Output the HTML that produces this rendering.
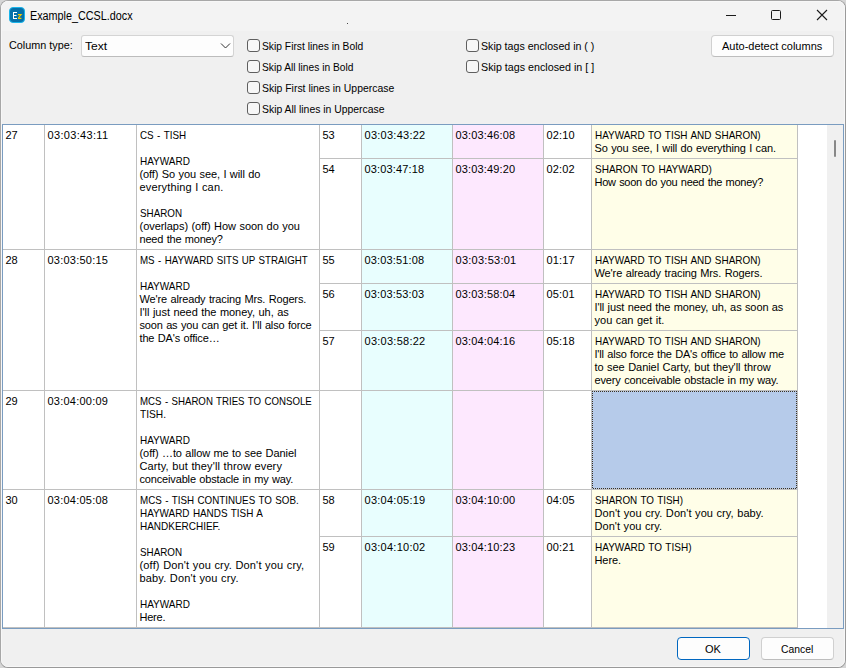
<!DOCTYPE html>
<html><head><meta charset="utf-8">
<style>
html,body{margin:0;padding:0;}
body{width:846px;height:668px;overflow:hidden;background:#d6d6d6;position:relative;font-family:"Liberation Sans",sans-serif;color:#000;}
#win{position:absolute;left:0;top:0;width:844px;height:666px;border:1px solid #a7a7a7;border-right-color:#9a9a9a;border-bottom-color:#999;border-radius:8px;background:#f0f0f0;overflow:hidden;}
#hl{position:absolute;left:1px;top:1px;width:842px;height:664px;border:1px solid #f7f7f7;border-radius:7px;pointer-events:none;}
#title{position:absolute;left:0;top:0;width:844px;height:30px;background:#f3f3f3;}
.abs{position:absolute;}
.lbl{position:absolute;font-size:11px;line-height:16px;white-space:pre;color:#000;transform-origin:0 0;}
.cb{position:absolute;width:11px;height:11px;border:1px solid #5f5f5f;border-radius:3px;background:#f7f7f7;box-sizing:content-box;}
.btn{position:absolute;box-sizing:border-box;border:1px solid #d0d0d0;border-bottom-color:#bdbdbd;border-radius:4px;background:#fdfdfd;}
#grid{position:absolute;left:2px;top:124px;width:842px;height:505px;}
#tbl{position:absolute;left:2px;top:124px;width:840px;height:503px;border:1px solid #7a9cc0;background:#fff;overflow:hidden;}
.bg{position:absolute;}
.vl{position:absolute;width:1px;background:#c0c0c0;}
.hl{position:absolute;height:1px;background:#c0c0c0;}
.sel{position:absolute;background:#b6cbea;box-sizing:border-box;}
.t{position:absolute;font-size:11px;line-height:13px;white-space:pre;color:#000;transform-origin:0 0;}
.u{letter-spacing:-0.6px;}
</style></head><body>
<div id="win"><div id="title"></div></div>
<div id="hl"></div>
<!-- icon -->
<svg class="abs" style="left:9px;top:7px" width="16" height="16" viewBox="0 0 16 16">
  <rect x="0.5" y="0.5" width="15" height="15" rx="3.5" ry="3.5" fill="#0670a8" stroke="#19b4ea" stroke-width="1"/>
  <path d="M4.5 5.5 H8 M4.5 5 V12 M4.5 8.5 H7.5 M4.5 11.5 H8" stroke="#fff" stroke-width="1" fill="none"/>
  <path d="M9 7.6 H12.2 L9.3 11 M9 11.4 H12.4" stroke="#f7c600" stroke-width="1.1" fill="none"/>
</svg>
<div class="lbl" style="left:30px;top:8px;font-size:12px;transform:scaleX(0.9)">Example_CCSL.docx</div>
<div class="abs" style="left:346.6px;top:22.6px;width:1.6px;height:1.6px;background:#111;border-radius:0.8px"></div>
<!-- window controls -->
<div class="abs" style="left:726px;top:15px;width:10px;height:1px;background:#1a1a1a"></div>
<div class="abs" style="left:771px;top:10px;width:8px;height:8px;border:1px solid #1a1a1a;border-radius:1.5px"></div>
<svg class="abs" style="left:816px;top:9px" width="12" height="12" viewBox="0 0 12 12"><path d="M1 1 L11 11 M11 1 L1 11" stroke="#1a1a1a" stroke-width="1.1"/></svg>

<div class="lbl" style="left:8.5px;top:37px;transform:scaleX(0.984)">Column type:</div>
<div class="abs" style="left:81px;top:35px;width:151px;height:20px;border:1px solid #d4d4d4;border-bottom-color:#bcbcbc;border-radius:3px;background:#fdfdfd"></div>
<div class="lbl" style="left:85px;top:38px;transform:scaleX(1.1)">Text</div>
<svg class="abs" style="left:220px;top:42px" width="11" height="7" viewBox="0 0 11 7"><path d="M1 1.5 L5.5 6 L10 1.5" stroke="#333" stroke-width="1" fill="none"/></svg>

<div class="cb" style="left:247px;top:39px"></div>
<div class="lbl" style="left:262px;top:38px;transform:scaleX(0.935)">Skip First lines in Bold</div>
<div class="cb" style="left:247px;top:60px"></div>
<div class="lbl" style="left:262px;top:59px;transform:scaleX(0.928)">Skip All lines in Bold</div>
<div class="cb" style="left:247px;top:81px"></div>
<div class="lbl" style="left:262px;top:80px;transform:scaleX(0.949)">Skip First lines in Uppercase</div>
<div class="cb" style="left:247px;top:102px"></div>
<div class="lbl" style="left:262px;top:101px;transform:scaleX(0.945)">Skip All lines in Uppercase</div>

<div class="cb" style="left:466px;top:39px"></div>
<div class="lbl" style="left:481px;top:38px;transform:scaleX(0.966)">Skip tags enclosed in ( )</div>
<div class="cb" style="left:466px;top:60px"></div>
<div class="lbl" style="left:481px;top:59px;transform:scaleX(0.974)">Skip tags enclosed in [ ]</div>

<div class="btn" style="left:711px;top:35px;width:123px;height:22px"></div>
<div class="lbl" style="left:722px;top:38px;">Auto-detect columns</div>

<div id="tbl"></div>
<div class="bg" style="left:362px;top:125px;width:90px;height:502px;background:#e8fefe"></div>
<div class="bg" style="left:453px;top:125px;width:90px;height:502px;background:#fde8fe"></div>
<div class="bg" style="left:592px;top:125px;width:205px;height:502px;background:#fffee8"></div>
<div class="sel" style="left:592px;top:391px;width:205px;height:98px"></div>
<div class="bg" style="left:592px;top:391px;width:205px;height:1px;background:repeating-linear-gradient(90deg,#3a3020 0 1px,transparent 1px 2px)"></div>
<div class="bg" style="left:592px;top:488px;width:204px;height:1px;background:repeating-linear-gradient(90deg,#3a3020 0 1px,transparent 1px 2px);background-position:1px 0"></div>
<div class="bg" style="left:592px;top:391px;width:1px;height:98px;background:repeating-linear-gradient(180deg,#3a3020 0 1px,transparent 1px 2px)"></div>
<div class="bg" style="left:796px;top:391px;width:1px;height:98px;background:repeating-linear-gradient(180deg,#3a3020 0 1px,transparent 1px 2px)"></div>
<div class="vl" style="left:44px;top:125px;height:503px"></div>
<div class="vl" style="left:136px;top:125px;height:503px"></div>
<div class="vl" style="left:319px;top:125px;height:503px"></div>
<div class="vl" style="left:361px;top:125px;height:503px"></div>
<div class="vl" style="left:452px;top:125px;height:503px"></div>
<div class="vl" style="left:543px;top:125px;height:503px"></div>
<div class="vl" style="left:591px;top:125px;height:503px"></div>
<div class="vl" style="left:797px;top:125px;height:503px"></div>
<div class="hl" style="left:3px;top:249px;width:794px"></div>
<div class="hl" style="left:3px;top:390px;width:794px"></div>
<div class="hl" style="left:3px;top:489px;width:794px"></div>
<div class="hl" style="left:3px;top:627px;width:794px"></div>
<div class="hl" style="left:319px;top:158px;width:478px"></div>
<div class="hl" style="left:319px;top:283px;width:478px"></div>
<div class="hl" style="left:319px;top:330px;width:478px"></div>
<div class="hl" style="left:319px;top:536px;width:478px"></div>
<div class="t" style="left:5.5px;top:129px">27</div>
<div class="t" style="left:47.5px;top:129px;letter-spacing:0.330px">03:03:43:11</div>
<div class="t" style="left:139.5px;top:129px;transform:scaleX(0.8945);word-spacing:0.800px">CS - TISH</div>
<div class="t" style="left:139.5px;top:155px;transform:scaleX(0.9074);word-spacing:0.800px">HAYWARD</div>
<div class="t" style="left:139.5px;top:168px;letter-spacing:-0.090px;word-spacing:0.490px">(off) So you see, I will do</div>
<div class="t" style="left:139.5px;top:181px;letter-spacing:0.157px;word-spacing:0.243px">everything I can.</div>
<div class="t" style="left:139.5px;top:207px;transform:scaleX(0.8933);word-spacing:0.800px">SHARON</div>
<div class="t" style="left:139.5px;top:220px;letter-spacing:-0.038px;word-spacing:0.438px">(overlaps) (off) How soon do you</div>
<div class="t" style="left:139.5px;top:233px;letter-spacing:-0.198px;word-spacing:0.598px">need the money?</div>
<div class="t" style="left:5.5px;top:254px">28</div>
<div class="t" style="left:47.5px;top:254px;letter-spacing:0.230px">03:03:50:15</div>
<div class="t" style="left:139.5px;top:254px;transform:scaleX(0.8851);word-spacing:0.800px">MS - HAYWARD SITS UP STRAIGHT</div>
<div class="t" style="left:139.5px;top:280px;transform:scaleX(0.9074);word-spacing:0.800px">HAYWARD</div>
<div class="t" style="left:139.5px;top:293px;letter-spacing:-0.145px;word-spacing:0.545px">We're already tracing Mrs. Rogers.</div>
<div class="t" style="left:139.5px;top:306px;letter-spacing:-0.024px;word-spacing:0.424px">I'll just need the money, uh, as</div>
<div class="t" style="left:139.5px;top:319px;letter-spacing:-0.164px;word-spacing:0.564px">soon as you can get it. I'll also force</div>
<div class="t" style="left:139.5px;top:332px;letter-spacing:-0.157px;word-spacing:0.557px">the DA's office…</div>
<div class="t" style="left:5.5px;top:395px">29</div>
<div class="t" style="left:47.5px;top:395px;letter-spacing:0.230px">03:04:00:09</div>
<div class="t" style="left:139.5px;top:395px;transform:scaleX(0.8793);word-spacing:0.800px">MCS - SHARON TRIES TO CONSOLE</div>
<div class="t" style="left:139.5px;top:408px;transform:scaleX(0.9259);word-spacing:0.800px">TISH.</div>
<div class="t" style="left:139.5px;top:434px;transform:scaleX(0.9074);word-spacing:0.800px">HAYWARD</div>
<div class="t" style="left:139.5px;top:447px;letter-spacing:-0.072px;word-spacing:0.472px">(off) …to allow me to see Daniel</div>
<div class="t" style="left:139.5px;top:460px;letter-spacing:0.128px;word-spacing:0.272px">Carty, but they'll throw every</div>
<div class="t" style="left:139.5px;top:473px;letter-spacing:-0.160px;word-spacing:0.560px">conceivable obstacle in my way.</div>
<div class="t" style="left:5.5px;top:494px">30</div>
<div class="t" style="left:47.5px;top:494px;letter-spacing:0.230px">03:04:05:08</div>
<div class="t" style="left:139.5px;top:494px;transform:scaleX(0.8906);word-spacing:0.800px">MCS - TISH CONTINUES TO SOB.</div>
<div class="t" style="left:139.5px;top:507px;transform:scaleX(0.8986);word-spacing:0.800px">HAYWARD HANDS TISH A</div>
<div class="t" style="left:139.5px;top:520px;transform:scaleX(0.9069);word-spacing:0.800px">HANDKERCHIEF.</div>
<div class="t" style="left:139.5px;top:546px;transform:scaleX(0.8933);word-spacing:0.800px">SHARON</div>
<div class="t" style="left:139.5px;top:559px;letter-spacing:0.164px;word-spacing:0.236px">(off) Don't you cry. Don't you cry,</div>
<div class="t" style="left:139.5px;top:572px;letter-spacing:0.157px;word-spacing:0.243px">baby. Don't you cry.</div>
<div class="t" style="left:139.5px;top:598px;transform:scaleX(0.9074);word-spacing:0.800px">HAYWARD</div>
<div class="t" style="left:139.5px;top:611px;letter-spacing:-0.225px">Here.</div>
<div class="t" style="left:322.5px;top:129px">53</div>
<div class="t" style="left:364.5px;top:129px;letter-spacing:0.260px">03:03:43:22</div>
<div class="t" style="left:455.5px;top:129px;letter-spacing:0.160px">03:03:46:08</div>
<div class="t" style="left:546.5px;top:129px;letter-spacing:0.175px">02:10</div>
<div class="t" style="left:594.5px;top:129px;transform:scaleX(0.9026);word-spacing:0.800px">HAYWARD TO TISH AND SHARON)</div>
<div class="t" style="left:594.5px;top:142px;letter-spacing:-0.107px;word-spacing:0.507px">So you see, I will do everything I can.</div>
<div class="t" style="left:322.5px;top:163px">54</div>
<div class="t" style="left:364.5px;top:163px;letter-spacing:0.160px">03:03:47:18</div>
<div class="t" style="left:455.5px;top:163px;letter-spacing:0.160px">03:03:49:20</div>
<div class="t" style="left:546.5px;top:163px;letter-spacing:0.175px">02:02</div>
<div class="t" style="left:594.5px;top:163px;transform:scaleX(0.9104);word-spacing:0.800px">SHARON TO HAYWARD)</div>
<div class="t" style="left:594.5px;top:176px;letter-spacing:-0.276px;word-spacing:0.676px">How soon do you need the money?</div>
<div class="t" style="left:322.5px;top:254px">55</div>
<div class="t" style="left:364.5px;top:254px;letter-spacing:0.160px">03:03:51:08</div>
<div class="t" style="left:455.5px;top:254px;letter-spacing:0.260px">03:03:53:01</div>
<div class="t" style="left:546.5px;top:254px;letter-spacing:0.175px">01:17</div>
<div class="t" style="left:594.5px;top:254px;transform:scaleX(0.9026);word-spacing:0.800px">HAYWARD TO TISH AND SHARON)</div>
<div class="t" style="left:594.5px;top:267px;letter-spacing:-0.102px;word-spacing:0.502px">We're already tracing Mrs. Rogers.</div>
<div class="t" style="left:322.5px;top:288px">56</div>
<div class="t" style="left:364.5px;top:288px;letter-spacing:0.160px">03:03:53:03</div>
<div class="t" style="left:455.5px;top:288px;letter-spacing:0.160px">03:03:58:04</div>
<div class="t" style="left:546.5px;top:288px;letter-spacing:0.175px">05:01</div>
<div class="t" style="left:594.5px;top:288px;transform:scaleX(0.9026);word-spacing:0.800px">HAYWARD TO TISH AND SHARON)</div>
<div class="t" style="left:594.5px;top:301px;letter-spacing:-0.108px;word-spacing:0.508px">I'll just need the money, uh, as soon as</div>
<div class="t" style="left:594.5px;top:314px;letter-spacing:0.011px;word-spacing:0.389px">you can get it.</div>
<div class="t" style="left:322.5px;top:335px">57</div>
<div class="t" style="left:364.5px;top:335px;letter-spacing:0.260px">03:03:58:22</div>
<div class="t" style="left:455.5px;top:335px;letter-spacing:0.160px">03:04:04:16</div>
<div class="t" style="left:546.5px;top:335px;letter-spacing:0.175px">05:18</div>
<div class="t" style="left:594.5px;top:335px;transform:scaleX(0.9026);word-spacing:0.800px">HAYWARD TO TISH AND SHARON)</div>
<div class="t" style="left:594.5px;top:348px;letter-spacing:-0.192px;word-spacing:0.592px">I'll also force the DA's office to allow me</div>
<div class="t" style="left:594.5px;top:361px;letter-spacing:-0.036px;word-spacing:0.436px">to see Daniel Carty, but they'll throw</div>
<div class="t" style="left:594.5px;top:374px;letter-spacing:-0.134px;word-spacing:0.534px">every conceivable obstacle in my way.</div>
<div class="t" style="left:322.5px;top:494px">58</div>
<div class="t" style="left:364.5px;top:494px;letter-spacing:0.260px">03:04:05:19</div>
<div class="t" style="left:455.5px;top:494px;letter-spacing:0.160px">03:04:10:00</div>
<div class="t" style="left:546.5px;top:494px;letter-spacing:0.175px">04:05</div>
<div class="t" style="left:594.5px;top:494px;transform:scaleX(0.8961);word-spacing:0.800px">SHARON TO TISH)</div>
<div class="t" style="left:594.5px;top:507px;letter-spacing:0.084px;word-spacing:0.316px">Don't you cry. Don't you cry, baby.</div>
<div class="t" style="left:594.5px;top:520px;letter-spacing:0.064px;word-spacing:0.336px">Don't you cry.</div>
<div class="t" style="left:322.5px;top:541px">59</div>
<div class="t" style="left:364.5px;top:541px;letter-spacing:0.260px">03:04:10:02</div>
<div class="t" style="left:455.5px;top:541px;letter-spacing:0.160px">03:04:10:23</div>
<div class="t" style="left:546.5px;top:541px;letter-spacing:0.175px">00:21</div>
<div class="t" style="left:594.5px;top:541px;transform:scaleX(0.9092);word-spacing:0.800px">HAYWARD TO TISH)</div>
<div class="t" style="left:594.5px;top:554px;letter-spacing:-0.075px">Here.</div>
<!-- scrollbar -->
<div class="abs" style="left:827px;top:125px;width:16px;height:503px;background:#f0f0f0"></div>
<div class="abs" style="left:834px;top:140px;width:2px;height:17px;background:#888;border-radius:1px"></div>

<div class="btn" style="left:677px;top:637px;width:73px;height:23px;border:1px solid #0067c0;"></div>
<div class="lbl" style="left:705px;top:641px;">OK</div>
<div class="btn" style="left:761px;top:637px;width:73px;height:23px"></div>
<div class="lbl" style="left:780.5px;top:641px;transform:scaleX(0.94)">Cancel</div>
</body></html>
